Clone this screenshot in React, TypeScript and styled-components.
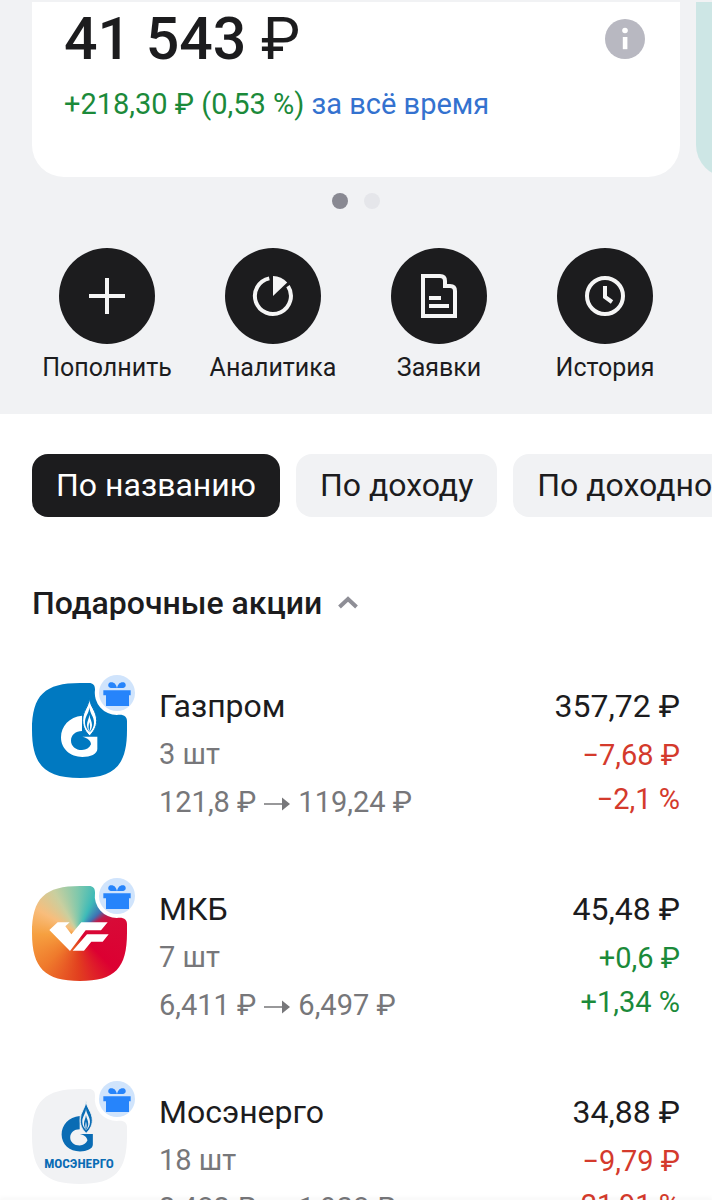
import { useState } from "react";
import type { ReactNode } from "react";
import styled, { createGlobalStyle } from "styled-components";

type Holding = {
  id: string;
  name: string;
  amount: string;
  buyPrice: string;
  currentPrice: string;
  total: string;
  change: string;
  changePercent: string;
  positive: boolean;
  background: string;
  logo: ReactNode;
};

const GazpromMark = ({ color, inner }: { color: string; inner: string }) => (
  <>
    <path
      fill={color}
      d="M150 101C112 105 87 132 87 166c0 35 28 59 64 59 24 0 45-9 45-24v-37h-45c16 4 26 12 26 23-5 11-14 17-27 17-19 0-33-12-33-28 0-17 14-29 33-29Z"
    />
    <path
      fill={color}
      stroke={inner}
      strokeWidth={3}
      d="M172 46c1 27 22 40 22 70 0 22-12 36-21 45-10-9-21-22-21-46 0-29 20-42 20-69Z"
    />
    <path
      fill={inner}
      d="M172 76c2 20 14 28 14 46 0 13-6 21-13 29-7-8-14-16-14-30 0-18 12-26 13-45Z"
    />
    <path
      fill={color}
      d="M172 98c2 13 8 19 8 31 0 9-4 15-7 21-4-6-8-12-8-21 0-12 6-18 7-31Z"
    />
    <path fill={inner} d="M172 120c2 10 4 17 0 28-4-11-2-18 0-28Z" />
  </>
);

const MosenergoMark = () => (
  <>
    <g transform="translate(14 -3) scale(.86)">
      <GazpromMark color="#0a6cb4" inner="#f1f2f4" />
    </g>
    <LogoText x="141" y="241">
      МОСЭНЕРГО
    </LogoText>
  </>
);

const holdings: Holding[] = [
  {
    id: "gazprom",
    name: "Газпром",
    amount: "3 шт",
    buyPrice: "121,8 ₽",
    currentPrice: "119,24 ₽",
    total: "357,72 ₽",
    change: "−7,68 ₽",
    changePercent: "−2,1 %",
    positive: false,
    background: "#0079c1",
    logo: <GazpromMark color="#fff" inner="#0079c1" />,
  },
  {
    id: "mkb",
    name: "МКБ",
    amount: "7 шт",
    buyPrice: "6,411 ₽",
    currentPrice: "6,497 ₽",
    total: "45,48 ₽",
    change: "+0,6 ₽",
    changePercent: "+1,34 %",
    positive: true,
    background: `conic-gradient(from 0deg at 48% 50%, #7fc8ac, #3dbab8 24deg,
      #3e72b4 46deg, #b81f50 58deg, #d80a37 70deg, #dc0032 135deg,
      #e2401f 180deg, #ef7a2c 225deg, #f6a040 268deg, #f8bd7c 300deg,
      #c9cf9f 330deg, #7fc8ac 360deg)`,
    logo: (
      <path
        fill="#fff"
        d="M52 135 77 112h36l-13 12 18 24 30-36h79l-20 24h-46l-47 62ZM122 197l43-49h65l-18 22h-34l-22 27Z"
      />
    ),
  },
  {
    id: "mosenergo",
    name: "Мосэнерго",
    amount: "18 шт",
    buyPrice: "2,482 ₽",
    currentPrice: "1,938 ₽",
    total: "34,88 ₽",
    change: "−9,79 ₽",
    changePercent: "−21,91 %",
    positive: false,
    background: "#f1f2f4",
    logo: <MosenergoMark />,
  },
];

const actions = [
  {
    label: "Пополнить",
    icon: <path d="M24 6v36M6 24h36" />,
  },
  {
    label: "Аналитика",
    icon: (
      <>
        <path d="M20.3 6.4A18 18 0 1 0 39 14.2" />
        <path fill="#f5f5f5" stroke="none" d="M24 24V4a20 20 0 0 1 14.2 6.4Z" />
      </>
    ),
  },
  {
    label: "Заявки",
    icon: <path d="M8 4h17q5 0 5 5v5h5q5 0 5 5v25H8ZM14 26h12M14 34h20" />,
  },
  {
    label: "История",
    icon: (
      <>
        <circle cx="24" cy="24" r="18" />
        <path d="M24 14v11l7 5" />
      </>
    ),
  },
];

const sortOptions = ["По названию", "По доходу", "По доходности"];

const GiftBadge = () => (
  <Badge viewBox="0 0 108 108" aria-hidden="true">
    <circle cx="54" cy="54" r="54" fill="#d0e4fc" />
    <path
      fill="#2684fb"
      d="M13 46h82v15h-5v32H21V61h-8ZM54 40c-2-14-11-20-20-18-9 3-8 16 1 17h38c9-1 10-14 1-17-9-2-18 4-20 18Z"
    />
  </Badge>
);

const HoldingRow = ({ holding }: { holding: Holding }) => (
  <Row>
    <LogoWrapper>
      <LogoTile $background={holding.background}>
        <svg width="96" height="96" viewBox="0 0 288 288" aria-hidden="true">
          {holding.logo}
        </svg>
      </LogoTile>
      <GiftBadge />
    </LogoWrapper>
    <Info>
      <Name>{holding.name}</Name>
      <Detail>{holding.amount}</Detail>
      <Detail>
        {holding.buyPrice}
        <Arrow viewBox="0 0 26 14" aria-label="→">
          <path d="M0 6.300h18V.5L26 7l-8 6.500V7.700H0Z" />
        </Arrow>
        {holding.currentPrice}
      </Detail>
    </Info>
    <Totals>
      <Name>{holding.total}</Name>
      <Change $positive={holding.positive}>{holding.change}</Change>
      <Change $positive={holding.positive}>{holding.changePercent}</Change>
    </Totals>
  </Row>
);

const App = () => {
  const [sort, setSort] = useState(sortOptions[0]);
  const [open, setOpen] = useState(true);

  return (
    <Screen>
      <GlobalStyle />
      <Content>
        <Header>
          <Carousel>
            <Card>
              <CardTop>
                <Balance>
                  <strong>41 543</strong> ₽
                </Balance>
                <InfoButton type="button" aria-label="Информация">
                  <svg width="40" height="40" viewBox="0 0 40 40">
                    <circle cx="20" cy="20" r="20" fill="#b8b8c1" />
                    <circle cx="20" cy="11.5" r="2.8" fill="#fff" />
                    <path d="M17.800 18h4.600v12.200h-4.600z" fill="#fff" />
                  </svg>
                </InfoButton>
              </CardTop>
              <Profit>
                +218,30 ₽ (0,53 %) <a href="#period">за всё время</a>
              </Profit>
            </Card>
            <NextCard />
          </Carousel>
          <Dots>
            <Dot $active />
            <Dot />
          </Dots>
          <Actions>
            {actions.map((action) => (
              <Action key={action.label} type="button">
                <ActionIcon>
                  <svg
                    width="48"
                    height="48"
                    viewBox="0 0 48 48"
                    fill="none"
                    stroke="#f5f5f5"
                    strokeWidth="4"
                  >
                    {action.icon}
                  </svg>
                </ActionIcon>
                {action.label}
              </Action>
            ))}
          </Actions>
        </Header>
        <Chips>
          {sortOptions.map((option) => (
            <Chip
              key={option}
              type="button"
              $active={option === sort}
              onClick={() => setSort(option)}
            >
              {option}
            </Chip>
          ))}
        </Chips>
        <Section>
          <SectionTitle>
            <SectionToggle
              type="button"
              aria-expanded={open}
              onClick={() => setOpen(!open)}
            >
              Подарочные акции
              <Chevron $open={open} viewBox="0 0 20 14">
                <path d="m1.500 11 8.500-8 8.500 8" />
              </Chevron>
            </SectionToggle>
          </SectionTitle>
          {open && (
            <List>
              {holdings.map((holding) => (
                <HoldingRow key={holding.id} holding={holding} />
              ))}
            </List>
          )}
        </Section>
      </Content>
      <BottomEdge />
    </Screen>
  );
};

const GlobalStyle = createGlobalStyle`
  * {
    box-sizing: border-box;
  }

  body {
    margin: 0;
    background: #fff;
    color: #1c1c1e;
    font-family: Roboto, "Noto Sans", sans-serif;
  }

  :where(button) {
    border: 0;
    padding: 0;
    background: none;
    color: inherit;
    font: inherit;
    cursor: pointer;
  }
`;

const Screen = styled.div`
  display: flex;
  flex-direction: column;
  height: 100vh;
  overflow: hidden;
`;

const Content = styled.main`
  flex: 1;
  min-height: 0;
  overflow-x: hidden;
  overflow-y: auto;
  scrollbar-width: none;
`;

const BottomEdge = styled.div`
  z-index: 1;
  box-shadow: 0 0 5px 1px rgba(0, 0, 0, 0.08);
`;

const Header = styled.header`
  padding: 2px 0 30px;
  background: #f1f2f4;
`;

const Carousel = styled.div`
  display: flex;
  gap: 16px;
  padding: 0 32px;
  overflow: hidden;
`;

const Card = styled.section`
  flex: 0 0 100%;
  padding: 0 32px 53px;
  border-radius: 0 0 32px 32px;
  background: #fff;
`;

const NextCard = styled(Card)`
  background: #cde6e5;
`;

const CardTop = styled.div`
  display: flex;
  align-items: center;
  justify-content: space-between;
`;

const Balance = styled.div`
  font-size: 59px;
  line-height: 74px;

  strong {
    font-weight: 500;
  }
`;

const InfoButton = styled.button`
  display: flex;
  margin-right: 3px;
`;

const Profit = styled.div`
  margin-top: 8px;
  color: #1b8a3a;
  font-size: 29px;
  line-height: 40px;

  a {
    color: #3472cf;
    text-decoration: none;
  }
`;

const Dots = styled.div`
  display: flex;
  justify-content: center;
  gap: 16px;
  margin-top: 16px;
`;

const Dot = styled.span<{ $active?: boolean }>`
  width: 16px;
  height: 16px;
  border-radius: 50%;
  background: ${({ $active }) => ($active ? "#898992" : "#e5e6ea")};
`;

const Actions = styled.nav`
  display: grid;
  grid-template-columns: repeat(4, 1fr);
  padding: 0 24px;
  margin-top: 39px;
`;

const Action = styled.button`
  display: flex;
  flex-direction: column;
  align-items: center;
  gap: 8px;
  font-size: 25px;
  line-height: 32px;
`;

const ActionIcon = styled.span`
  display: flex;
  align-items: center;
  justify-content: center;
  width: 96px;
  height: 96px;
  border-radius: 50%;
  background: #1c1c1e;
`;

const Chips = styled.div`
  display: flex;
  gap: 16px;
  padding: 40px 0 0 32px;
  overflow: hidden;
`;

const Chip = styled.button<{ $active: boolean }>`
  flex: none;
  padding: 12px 24px;
  border-radius: 16px;
  background: ${({ $active }) => ($active ? "#1c1c1e" : "#f1f2f4")};
  color: ${({ $active }) => ($active ? "#fff" : "#1c1c1e")};
  font-size: 32px;
  line-height: 39px;
`;

const Section = styled.section`
  padding: 66px 32px 0;
`;

const SectionTitle = styled.h2`
  margin: 0;
  font-size: 32px;
  font-weight: 500;
  line-height: 40px;
`;

const SectionToggle = styled.button`
  display: flex;
  align-items: center;
  gap: 16px;
`;

const Chevron = styled.svg<{ $open: boolean }>`
  width: 20px;
  height: 14px;
  fill: none;
  stroke: #8e8e96;
  stroke-width: 4;
  transform: ${({ $open }) => ($open ? "none" : "rotate(180deg)")};
`;

const List = styled.ul`
  display: flex;
  flex-direction: column;
  gap: 58px;
  margin: 59px 0 0;
  padding: 0;
  list-style: none;
`;

const Row = styled.li`
  display: flex;
  gap: 31px;
  height: 145px;
`;

const LogoWrapper = styled.div`
  position: relative;
  flex: none;
  width: 96px;
  height: 96px;
`;

const LogoTile = styled.div<{ $background: string }>`
  height: 96px;
  background: ${({ $background }) => $background};
  clip-path: path(
    "M0 48C0 13 13 1 48 1H57C61 1 63 3 63 8A22 22 0 0 0 85 33C92 32 95 35 95 39V48C95 83 83 96 48 96C13 96 0 83 0 48Z"
  );
`;

const LogoText = styled.text`
  fill: #0a6cb4;
  font-family: "Roboto Condensed", "Liberation Sans Narrow", Roboto, sans-serif;
  font-size: 40px;
  font-weight: 700;
  text-anchor: middle;
`;

const Badge = styled.svg`
  position: absolute;
  top: -7px;
  right: -7px;
  width: 36px;
  height: 36px;
`;

const Info = styled.div`
  flex: 1;
  min-width: 0;
`;

const Name = styled.div`
  font-size: 32px;
  line-height: 48px;
`;

const Detail = styled.div`
  color: #77777a;
  font-size: 29px;
  line-height: 48px;
`;

const Arrow = styled.svg`
  width: 26px;
  height: 14px;
  margin: 0 8px;
  fill: currentColor;
  vertical-align: middle;
`;

const Totals = styled.div`
  text-align: right;
  white-space: nowrap;
`;

const Change = styled.div<{ $positive: boolean }>`
  color: ${({ $positive }) => ($positive ? "#1b8a3a" : "#d43a2c")};
  font-size: 29px;
  line-height: 44px;

  ${Name} + & {
    margin-top: 3px;
  }
`;

export default App;
